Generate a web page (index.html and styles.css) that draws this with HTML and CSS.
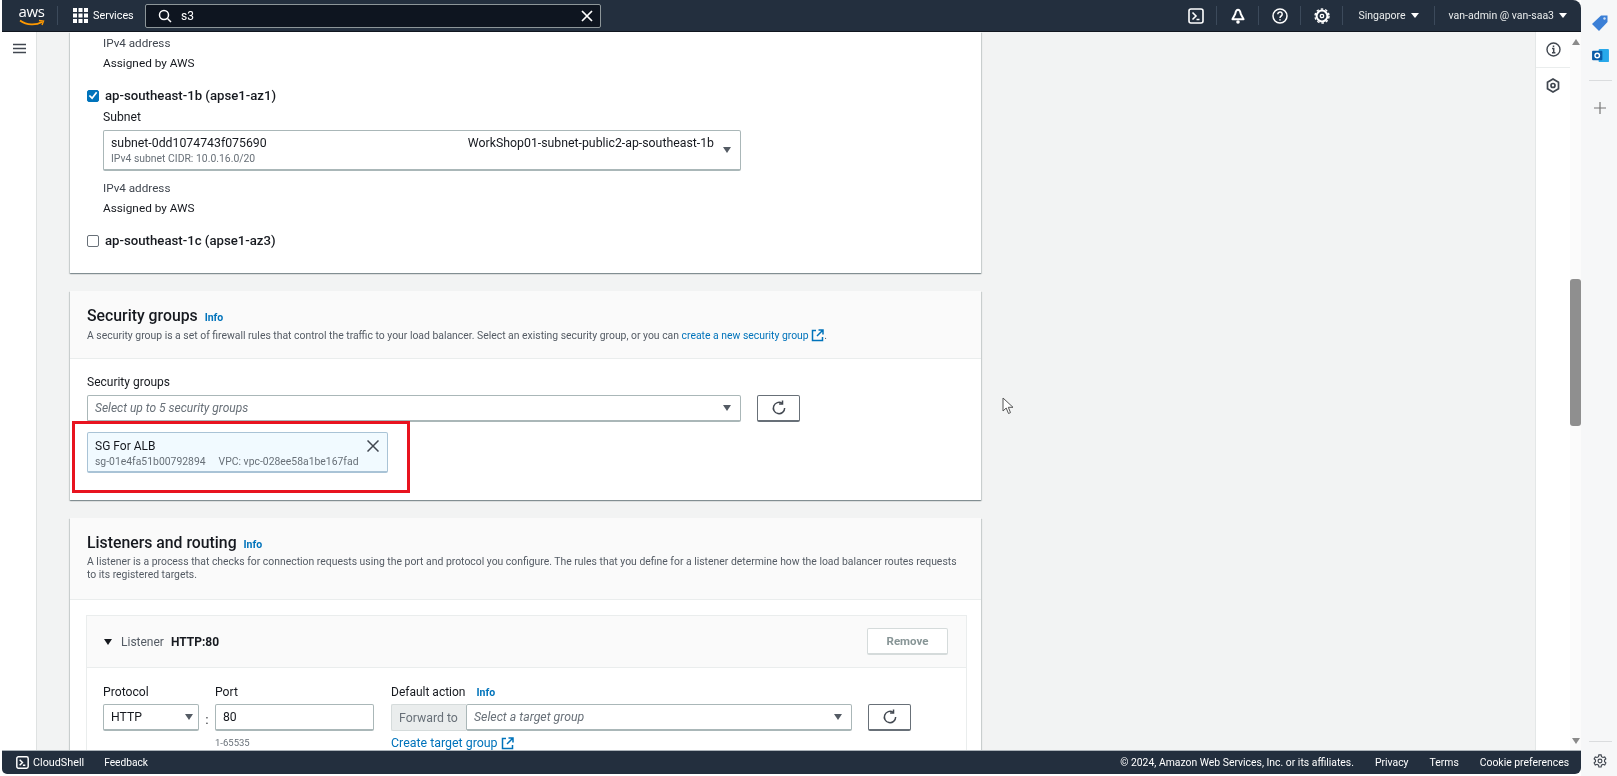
FILE: index.html
```html
<!DOCTYPE html>
<html lang="en">
<head>
<meta charset="utf-8">
<title>Create load balancer</title>
<link rel="stylesheet" href="styles.css">
</head>
<body>
<div class="window">
  <div class="console">
    <header class="topbar">
      <div class="aws-logo">
        <span class="aws-word">aws</span>
        <svg class="smile" width="26" height="8" viewBox="0 0 26 8"><path d="M1 1.500C8 6.500 17 6.500 23 3" fill="none" stroke="#ff9900" stroke-width="1.700"/><path d="M20 1.500l4.500.6-1.500 4" fill="none" stroke="#ff9900" stroke-width="1.400"/></svg>
      </div>
      <span class="bar-div first"></span>
      <svg class="grid-ico" width="15" height="15" viewBox="0 0 15 15" fill="#fff"><rect x="0" y="0" width="4" height="4"/><rect x="5.500" y="0" width="4" height="4"/><rect x="11" y="0" width="4" height="4"/><rect x="0" y="5.500" width="4" height="4"/><rect x="5.500" y="5.500" width="4" height="4"/><rect x="11" y="5.500" width="4" height="4"/><rect x="0" y="11" width="4" height="4"/><rect x="5.500" y="11" width="4" height="4"/><rect x="11" y="11" width="4" height="4"/></svg>
      <span class="services">Services</span>
      <div class="search">
        <svg width="14" height="14" viewBox="0 0 14 14" fill="none" stroke="#fff" stroke-width="1.500"><circle cx="6" cy="6" r="4.500"/><path d="M9.500 9.500L13 13"/></svg>
        <span class="search-text">s3</span>
        <svg class="search-x" width="12" height="12" viewBox="0 0 12 12" stroke="#fff" stroke-width="1.700"><path d="M1 1l10 10M11 1L1 11"/></svg>
      </div>
      <div class="top-right">
        <svg class="ti" width="16" height="16" viewBox="0 0 16 16" fill="none" stroke="#fff" stroke-width="1.600"><rect x="1" y="1" width="14" height="14" rx="2"/><path d="M4.500 4.500L8 8l-3.500 3.500M8.500 11.500h3"/></svg>
        <span class="bar-div"></span>
        <svg class="ti" width="16" height="16" viewBox="0 0 16 16" fill="#fff"><path d="M8 1.800C6.200 1.800 5.600 3.800 5.200 6L2.400 11.200h11.200L10.800 6C10.400 3.800 9.800 1.800 8 1.800z" fill="none" stroke="#fff" stroke-width="1.900" stroke-linejoin="round"/><circle cx="8" cy="14" r="1.800"/></svg>
        <span class="bar-div"></span>
        <svg class="ti" width="16" height="16" viewBox="0 0 16 16" fill="none" stroke="#fff" stroke-width="1.500"><circle cx="8" cy="8" r="7"/><path d="M5.800 6.200a2.200 2.200 0 1 1 3.400 1.800C8.400 8.500 8 9 8 10"/><path d="M8 11.200v1.300"/></svg>
        <span class="bar-div"></span>
        <svg class="ti" width="16" height="16" viewBox="0 0 16 16" fill="none" stroke="#fff"><circle cx="8" cy="8" r="5.400" stroke-width="2"/><circle cx="8" cy="8" r="7" stroke-width="1.400" stroke-dasharray="2.500 2"/><circle cx="8" cy="8" r="1.700" stroke-width="1.300"/></svg>
        <span class="bar-div"></span>
        <span class="top-menu region">Singapore</span><span class="caret"></span>
        <span class="bar-div"></span>
        <span class="top-menu">van-admin @ van-saa3</span><span class="caret"></span>
      </div>
    </header>

    <div class="main">
      <nav class="side-nav">
        <svg width="13" height="11" viewBox="0 0 13 11" stroke="#414750" stroke-width="1.600"><path d="M0 1.500h13M0 5.500h13M0 9.500h13"/></svg>
      </nav>

      <main class="content">
        <div class="column">
          <section class="card card-az">
            <div class="az-inner">
              <div class="field-label muted ipv-first">IPv4 address</div>
              <div class="plain">Assigned by AWS</div>
            </div>
            <label class="az-row az-b"><span class="check on"><svg width="11" height="11" viewBox="0 0 11 11" fill="none" stroke="#fff" stroke-width="1.900"><path d="M1.500 5.500l3 3 5-6.500"/></svg></span>ap-southeast-1b (apse1-az1)</label>
            <div class="az-inner">
              <div class="field-label subnet-label">Subnet</div>
              <div class="subnet-select">
                <div class="subnet-main">
                  <div class="subnet-line"><span>subnet-0dd1074743f075690</span><span>WorkShop01-subnet-public2-ap-southeast-1b</span></div>
                  <div class="tiny subnet-cidr">IPv4 subnet CIDR: 10.0.16.0/20</div>
                </div>
                <span class="select-caret"></span>
              </div>
              <div class="field-label muted ipv-second">IPv4 address</div>
              <div class="plain">Assigned by AWS</div>
            </div>
            <label class="az-row az-c"><span class="check"></span>ap-southeast-1c (apse1-az3)</label>
          </section>

          <section class="card card-sg">
            <div class="card-head sg-head">
              <h2>Security groups <a class="info">Info</a></h2>
              <p>A security group is a set of firewall rules that control the traffic to your load balancer. Select an existing security group, or you can <a class="link">create a new security group <svg class="ext" width="13" height="13" viewBox="0 0 13 13" fill="none" stroke="#0073bb" stroke-width="1.500"><path d="M5 1.500H1.500v10h10V8M7.500 1h4.500v4.500M12 1L6 7"/></svg></a>.</p>
            </div>
            <div class="sg-body">
              <div class="field-label sg-label">Security groups</div>
              <div class="sg-controls">
                <div class="select ph sg-select">Select up to 5 security groups<span class="select-caret"></span></div>
                <button class="refresh"><svg width="16" height="16" viewBox="0 0 15 15" fill="none" stroke="#414750" stroke-width="1.400"><path d="M12.800 7.500a5.300 5.300 0 1 1-2.400-4.400"/><path d="M10.800 .5v3.200H7.600"/></svg></button>
              </div>
              <div class="token">
                <div class="token-text">
                  <div class="token-name">SG For ALB</div>
                  <div class="tiny token-sub"><span>sg-01e4fa51b00792894</span><span>VPC: vpc-028ee58a1be167fad</span></div>
                </div>
                <svg class="token-x" width="12" height="12" viewBox="0 0 12 12" stroke="#414750" stroke-width="1.500"><path d="M.5.5l11 11M11.500.5l-11 11"/></svg>
              </div>
              <div class="highlight"></div>
            </div>
          </section>

          <section class="card card-ls">
            <div class="card-head ls-head">
              <h2>Listeners and routing <a class="info">Info</a></h2>
              <p>A listener is a process that checks for connection requests using the port and protocol you configure. The rules that you define for a listener determine how the load balancer routes requests to its registered targets.</p>
            </div>
            <div class="ls-body">
              <div class="listener">
                <div class="listener-head">
                  <span class="tri"></span>
                  <span class="listener-word">Listener</span>
                  <b>HTTP:80</b>
                  <button class="remove">Remove</button>
                </div>
                <div class="listener-form">
                  <div class="col col-proto">
                    <div class="field-label">Protocol</div>
                    <div class="select proto">HTTP<span class="select-caret"></span></div>
                  </div>
                  <span class="colon">:</span>
                  <div class="col col-port">
                    <div class="field-label">Port</div>
                    <div class="select port">80</div>
                    <div class="tiny hint">1-65535</div>
                  </div>
                  <div class="col col-action">
                    <div class="field-label">Default action <a class="info action-info">Info</a></div>
                    <div class="action-row">
                      <span class="forward">Forward to</span>
                      <div class="select ph target">Select a target group<span class="select-caret"></span></div>
                      <button class="refresh"><svg width="16" height="16" viewBox="0 0 15 15" fill="none" stroke="#414750" stroke-width="1.400"><path d="M12.800 7.500a5.300 5.300 0 1 1-2.400-4.400"/><path d="M10.800 .5v3.200H7.600"/></svg></button>
                    </div>
                    <a class="link create">Create target group <svg class="ext" width="13" height="13" viewBox="0 0 13 13" fill="none" stroke="#0073bb" stroke-width="1.500"><path d="M5 1.500H1.500v10h10V8M7.500 1h4.500v4.500M12 1L6 7"/></svg></a>
                  </div>
                </div>
              </div>
            </div>
          </section>
        </div>
        <svg class="cursor" width="12" height="18" viewBox="0 0 12 18" fill="#fff" stroke="#555" stroke-width="1"><path d="M1 1v13l3.200-3 2.300 5.500 2-.9L6.300 10.300H11z"/></svg>
      </main>

      <aside class="tools">
        <div class="tool tool-info"><svg width="15" height="15" viewBox="0 0 15 15" fill="none" stroke="#414750" stroke-width="1.400"><circle cx="7.500" cy="7.500" r="6.500"/><path d="M6 6.500h1.700v4M6 10.800h3.400M7.500 3.500v1.600" stroke-width="1.500"/></svg></div>
        <div class="tool"><svg width="14" height="15" viewBox="0 0 14 15" fill="none" stroke="#414750" stroke-width="1.700"><path d="M7 1l5.500 3.200v6.600L7 14l-5.500-3.200V4.200z"/><circle cx="7" cy="7.500" r="2"/></svg></div>
      </aside>

      <div class="scrollbar">
        <span class="arrow up"></span>
        <div class="track"><span class="thumb"></span></div>
        <span class="arrow down"></span>
      </div>
    </div>

    <footer class="footbar">
      <svg width="13" height="13" viewBox="0 0 16 16" fill="none" stroke="#fff" stroke-width="1.800"><rect x="1" y="1" width="14" height="14" rx="2"/><path d="M4.500 4.500L8 8l-3.500 3.500M8.500 11.500h3"/></svg>
      <span class="foot-cloud">CloudShell</span>
      <span class="foot-feedback">Feedback</span>
      <div class="foot-right">
        <span>© 2024, Amazon Web Services, Inc. or its affiliates.</span>
        <span>Privacy</span>
        <span>Terms</span>
        <span>Cookie preferences</span>
      </div>
    </footer>
  </div>

  <aside class="edge">
    <svg class="edge-tag" width="18" height="18" viewBox="0 0 18 18"><path d="M1 10L10 1.500h6.500V8L8 17z" fill="#3b7fd6"/><circle cx="13.500" cy="4.500" r="1.200" fill="#cfe0f5"/></svg>
    <svg class="edge-out" width="17" height="15" viewBox="0 0 18 16"><rect x="7" y="1" width="11" height="14" rx="1" fill="#28a8ea"/><rect x="0" y="3" width="11" height="10" rx="1" fill="#0a5ca8"/><circle cx="5.500" cy="8" r="2.400" fill="none" stroke="#fff" stroke-width="1.500"/></svg>
    <span class="edge-line"></span>
    <svg class="edge-plus" width="12" height="12" viewBox="0 0 12 12" stroke="#777" stroke-width="1.200"><path d="M6 0v12M0 6h12"/></svg>
    <span class="edge-spacer"></span>
    <span class="edge-line"></span>
    <svg class="edge-gear" width="14" height="14" viewBox="0 0 16 16" fill="none" stroke="#414750" stroke-width="1.300"><path d="M6.700 1h2.600l.4 2 1.700 1 2-.7 1.300 2.300-1.500 1.300v2l1.500 1.300-1.300 2.300-2-.7-1.700 1-.4 2H6.700l-.4-2-1.700-1-2 .7-1.300-2.300 1.500-1.300v-2L1.300 5.600l1.300-2.300 2 .7 1.700-1z"/><circle cx="8" cy="8" r="2.200"/></svg>
  </aside>
</div>
</body>
</html>
```
FILE: styles.css
```css
* { box-sizing: border-box; }
html, body { margin: 0; padding: 0; height: 100%; overflow: hidden; }
body {
  background: #f6f7f8;
  font-family: Roboto, "Liberation Sans", sans-serif;
  font-size: 12px;
  color: #16191f;
}
a { text-decoration: none; }
button { font-family: inherit; }

.window { display: flex; width: 1617px; height: 776px; filter: blur(.45px); }
.console { width: 1581px; height: 776px; display: flex; flex-direction: column; background: #fff; }

/* top bar */
.topbar {
  height: 32px; margin-left: 2px; flex: none;
  display: flex; align-items: center;
  background: #232f3e; color: #fff;
  border-bottom: 1px solid #10161f;
  border-top-right-radius: 8px;
}
.aws-logo { width: 27px; margin-left: 16px; display: flex; flex-direction: column; align-items: center; height: 26px; }
.aws-word { font-family: "Open Sans", sans-serif; font-size: 15px; line-height: 17px; letter-spacing: -.3px; }
.smile { margin-top: -1px; }
.bar-div { width: 1px; height: 19px; background: #3c4a5b; flex: none; }
.bar-div.first { margin-left: 12px; }
.grid-ico { margin-left: 15px; }
.services { margin-left: 5px; width: 40px; font-size: 10.800px; }
.search {
  margin-left: 12px; width: 456px; height: 24px;
  display: flex; align-items: center;
  background: #0e1520; border: 1px solid #8d9699; border-radius: 2px;
  padding: 0 7px 0 12px;
}
.search-text { margin-left: 9px; font-size: 12px; }
.search-x { margin-left: auto; }
.top-right { margin-left: auto; display: flex; align-items: center; padding-right: 14px; font-size: 10.500px; }
.top-right .ti { margin: 0 12.500px; }
.top-right .bar-div { margin: 0; }
.top-menu { margin-left: 14px; white-space: nowrap; color: #eaeded; }
.top-menu.region { margin-left: 15px; }
.caret { width: 0; height: 0; border-left: 4px solid transparent; border-right: 4px solid transparent; border-top: 5px solid #fff; margin-left: 5px; margin-right: 15px; }
.caret:last-child { margin-right: 0; }

/* layout */
.main { flex: 1; display: flex; min-height: 0; }
.side-nav { width: 37px; flex: none; background: #fff; border-right: 1px solid #dfe2e2; padding: 11px 0 0 13px; }
.content { flex: 1; background: #f2f3f3; padding-left: 33px; overflow: hidden; position: relative; }
.column { width: 911px; display: flex; flex-direction: column; gap: 18px; }
.card { background: #fff; box-shadow: 0 1px 1px 0 rgba(0,28,36,.3), 1px 1px 1px 0 rgba(0,28,36,.12), -1px 1px 1px 0 rgba(0,28,36,.12); }

/* availability zones card */
.card-az { height: 241px; flex: none; padding-top: 4px; }
.az-inner { padding-left: 33px; }
.field-label { font-size: 12.200px; line-height: 15px; color: #16191f; }
.muted { color: #414750; font-size: 11.700px; }
.plain { font-size: 11.800px; line-height: 15px; margin-top: 5px; color: #16191f; }
.az-row { display: flex; align-items: center; font-weight: 500; font-size: 13.200px; line-height: 15px; padding-left: 17px; color: #16191f; }
.az-b { margin-top: 17px; }
.az-c { margin-top: 17px; }
.check { width: 12px; height: 12px; border: 1px solid #687078; border-radius: 2px; margin-right: 6px; background: #fff; display: flex; align-items: center; justify-content: center; flex: none; }
.check.on { background: #0073bb; border-color: #0073bb; }
.subnet-label { margin-top: 7px; }
.subnet-select { margin-top: 5px; width: 638px; height: 41px; border: 1px solid #aab7b8; border-bottom-width: 2px; border-radius: 2px; display: flex; align-items: center; padding: 0 9px 0 7px; background: #fff; }
.subnet-main { flex: 1; padding-right: 9px; }
.subnet-line { display: flex; justify-content: space-between; font-size: 12.300px; line-height: 15px; }
.tiny { font-size: 10.400px; line-height: 12px; color: #687078; }
.subnet-cidr { margin-top: 2px; }
.select-caret { width: 0; height: 0; border-left: 4.500px solid transparent; border-right: 4.500px solid transparent; border-top: 6px solid #545b64; flex: none; margin-left: auto; }
.ipv-second { margin-top: 10px; }
.ipv-first { margin-top: 0; }

/* card head */
.card-head { background: #fafafa; border-bottom: 1px solid #eaeded; padding-left: 17px; padding-right: 17px; }
.card-head h2 { margin: 0; font-size: 15.800px; line-height: 20px; font-weight: 500; color: #16191f; }
.card-head p { margin: 0; font-size: 10.400px; line-height: 13px; color: #545b64; }
.info { color: #0073bb; font-size: 10.500px; font-weight: 700; margin-left: 3px; }
.link { color: #0073bb; }
.ext { vertical-align: -3px; }

/* security groups */
.card-sg { height: 209px; flex: none; }
.sg-head { height: 68px; padding-top: 15px; }
.sg-head p { margin-top: 1px; }
.sg-body { padding: 16px 0 0 17px; position: relative; }
.sg-label { line-height: 15px; font-size: 12px; }
.sg-controls { display: flex; margin-top: 5px; }
.select { height: 27px; border: 1px solid #aab7b8; border-bottom-width: 2px; border-radius: 2px; display: flex; align-items: center; padding: 0 9px 0 7px; font-size: 12.200px; background: #fff; }
.ph { font-style: italic; color: #687078; }
.sg-select { width: 654px; font-size: 12px; }
.refresh { margin-left: 16px; width: 43px; height: 27px; border: 1px solid #687078; border-bottom-width: 2px; border-radius: 2px; background: #fff; display: flex; align-items: center; justify-content: center; padding: 0; }
.token { margin-top: 10px; width: 301px; height: 41px; background: #f1faff; border: 1px solid #a9c3d6; border-bottom-width: 2px; border-radius: 2px; display: flex; padding: 6px 8px 0 7px; }
.token-text { flex: 1; }
.token-name { font-size: 12px; line-height: 14px; }
.token-sub { display: flex; gap: 13px; margin-top: 3px; white-space: nowrap; }
.token-x { margin-top: 1px; }
.highlight { position: absolute; left: 2px; top: 62px; width: 338px; height: 72px; border: 3px solid #e8131f; }

/* listeners */
.card-ls { flex: none; height: 300px; }
.ls-head { height: 82px; padding-top: 15px; }
.ls-head p { margin-top: 0; }
.ls-body { padding: 15px 14px 0 16px; }
.listener { border: 1px solid #eaeded; border-bottom: none; }
.listener-head { height: 52px; background: #fafafa; border-bottom: 1px solid #eaeded; display: flex; align-items: center; padding: 0 18px 0 17px; font-size: 12px; }
.tri { width: 0; height: 0; border-left: 4.500px solid transparent; border-right: 4.500px solid transparent; border-top: 6px solid #16191f; margin-right: 9px; }
.listener-word { color: #545b64; margin-right: 7px; }
.remove { margin-left: auto; width: 81px; height: 27px; background: #fff; border: 1px solid #d5dbdb; border-bottom-width: 2px; border-radius: 2px; color: #879596; font-size: 11.500px; font-weight: 700; }
.listener-form { display: flex; padding: 17px 0 0 16px; }
.col-proto { width: 96px; }
.proto { margin-top: 4px; padding-right: 5px; padding-left: 7px; }
.colon { width: 16px; padding-top: 28px; text-align: center; font-size: 12px; }
.col-port { width: 159px; }
.port { margin-top: 4px; }
.hint { margin-top: 6px; font-size: 9.500px; }
.col-action { margin-left: 17px; }
.col-action .field-label { font-size: 12px; }
.action-info { margin-left: 8px; }
.action-row { display: flex; margin-top: 4px; }
.forward { width: 75px; height: 27px; background: #eaeded; border: 1px solid #d5dbdb; border-right: none; border-radius: 2px 0 0 2px; color: #687078; display: flex; align-items: center; padding-left: 7px; font-size: 12.300px; }
.target { width: 386px; border-color: #aab7b8; font-size: 12.300px; }
.create { display: block; margin-top: 4px; font-size: 12.400px; }
.cursor { position: absolute; left: 965px; top: 365px; }

/* tools + scrollbar */
.tools { width: 35px; flex: none; background: #fff; border-left: 1px solid #e4e7e7; }
.tool { height: 35px; display: flex; align-items: center; justify-content: center; }
.tool-info { height: 36px; margin-bottom: -1px; border-bottom: 1px solid #eaeded; }
.tool:last-child { margin-top: 1px; }
.scrollbar { width: 11px; flex: none; background: #fbfbfb; display: flex; flex-direction: column; align-items: center; padding: 7px 0 6px; }
.arrow { width: 0; height: 0; border-left: 4.500px solid transparent; border-right: 4.500px solid transparent; }
.up { border-bottom: 6px solid #8a8a8a; }
.down { border-top: 6px solid #8a8a8a; }
.track { flex: 1; width: 100%; padding-top: 234px; }
.thumb { display: block; width: 100%; height: 147px; background: #8f8f8f; border-radius: 3px; }

/* footer */
.footbar {
  height: 24px; margin: 0 0 2px 2px; flex: none;
  display: flex; align-items: center;
  background: #232f3e; color: #fff; font-size: 10.400px;
  border-top: 1px solid #aab2b8;
  border-bottom-left-radius: 5px; border-bottom-right-radius: 6px;
  padding: 0 0 0 14px;
}
.foot-cloud { margin-left: 4px; font-size: 10.800px; }
.foot-feedback { margin-left: 20px; font-size: 10.200px; }
.foot-right { margin-left: auto; display: flex; gap: 21px; padding-right: 12px; }

/* browser sidebar */
.edge { width: 36px; flex: none; display: flex; flex-direction: column; align-items: center; background: #f6f7f8; padding: 14px 0 0 2px; }
.edge-out { margin-top: 16px; }
.edge-line { width: 23px; height: 1px; background: #dadcde; margin-top: 17px; }
.edge-plus { margin-top: 21px; }
.edge-spacer { flex: 1; }
.edge-line + .edge-gear { margin-top: 12px; margin-bottom: 8px; }
```
